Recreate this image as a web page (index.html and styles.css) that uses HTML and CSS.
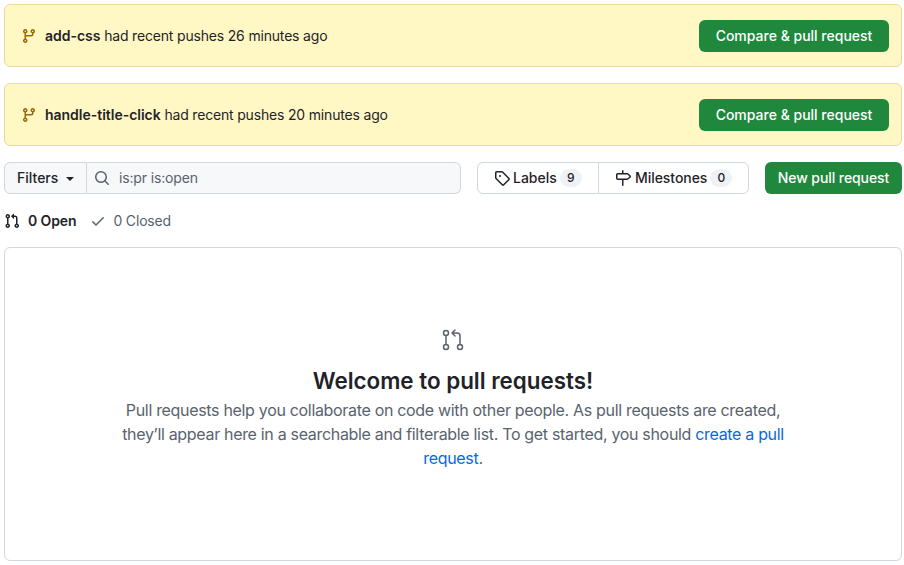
FILE: index.html
```html
<!DOCTYPE html>
<html lang="en">
<head>
<meta charset="utf-8">
<title>Pull requests</title>
<link rel="stylesheet" href="styles.css">
</head>
<body>
<div class="banner">
  <div class="banner-msg">
    <svg class="icon branch" viewBox="0 0 16 16"><path d="M9.5 3.25a2.25 2.25 0 1 1 3 2.122V6A2.5 2.5 0 0 1 10 8.5H6a1 1 0 0 0-1 1v1.128a2.251 2.251 0 1 1-1.5 0V5.372a2.25 2.25 0 1 1 1.5 0v1.836A2.493 2.493 0 0 1 6 7h4a1 1 0 0 0 1-1v-.628A2.25 2.25 0 0 1 9.5 3.25Zm-6 0a.75.75 0 1 0 1.5 0 .75.75 0 0 0-1.5 0Zm8.25-.75a.75.75 0 1 0 0 1.5.75.75 0 0 0 0-1.5ZM4.25 12a.75.75 0 1 0 0 1.5.75.75 0 0 0 0-1.5Z"/></svg>
    <span class="banner-text"><strong>add-css</strong> had recent pushes 26 minutes ago</span>
  </div>
  <a class="btn btn-compare">Compare &amp; pull request</a>
</div>
<div class="banner">
  <div class="banner-msg">
    <svg class="icon branch" viewBox="0 0 16 16"><path d="M9.5 3.25a2.25 2.25 0 1 1 3 2.122V6A2.5 2.5 0 0 1 10 8.5H6a1 1 0 0 0-1 1v1.128a2.251 2.251 0 1 1-1.5 0V5.372a2.25 2.25 0 1 1 1.5 0v1.836A2.493 2.493 0 0 1 6 7h4a1 1 0 0 0 1-1v-.628A2.25 2.25 0 0 1 9.5 3.25Zm-6 0a.75.75 0 1 0 1.5 0 .75.75 0 0 0-1.5 0Zm8.25-.75a.75.75 0 1 0 0 1.5.75.75 0 0 0 0-1.5ZM4.25 12a.75.75 0 1 0 0 1.5.75.75 0 0 0 0-1.5Z"/></svg>
    <span class="banner-text"><strong>handle-title-click</strong> had recent pushes 20 minutes ago</span>
  </div>
  <a class="btn btn-compare">Compare &amp; pull request</a>
</div>

<div class="toolbar">
  <div class="search-group">
    <div class="filters">Filters<span class="caret"></span></div>
    <div class="search">
      <svg class="icon muted" viewBox="0 0 16 16"><path d="M10.68 11.74a6 6 0 0 1-7.922-8.982 6 6 0 0 1 8.982 7.922l3.04 3.04a.749.749 0 0 1-.326 1.275.749.749 0 0 1-.734-.215ZM11.5 7a4.499 4.499 0 1 0-8.997 0A4.499 4.499 0 0 0 11.5 7Z"/></svg>
      <span>is:pr is:open</span>
    </div>
  </div>
  <div class="links">
    <div class="link link-labels">
      <svg class="icon" viewBox="0 0 16 16"><path d="M1 7.775V2.75C1 1.784 1.784 1 2.75 1h5.025c.464 0 .91.184 1.238.513l6.25 6.25a1.75 1.75 0 0 1 0 2.474l-5.026 5.026a1.75 1.75 0 0 1-2.474 0l-6.25-6.25A1.752 1.752 0 0 1 1 7.775Zm1.5 0c0 .066.026.13.073.177l6.25 6.25a.25.25 0 0 0 .354 0l5.025-5.025a.25.25 0 0 0 0-.354l-6.25-6.25a.25.25 0 0 0-.177-.073H2.75a.25.25 0 0 0-.25.25ZM6 5a1 1 0 1 1 0 2 1 1 0 0 1 0-2Z"/></svg>
      <span class="link-text">Labels</span><span class="counter">9</span>
    </div>
    <div class="link link-milestones">
      <svg class="icon" viewBox="0 0 16 16"><path d="M7.75 0a.75.75 0 0 1 .75.75V3h3.634c.414 0 .814.147 1.13.414l2.07 1.75a1.75 1.75 0 0 1 0 2.672l-2.07 1.75a1.75 1.75 0 0 1-1.13.414H8.5v5.25a.75.75 0 0 1-1.5 0V10H2.75A1.75 1.75 0 0 1 1 8.25v-3.5C1 3.784 1.784 3 2.75 3H7V.75A.75.75 0 0 1 7.75 0Zm4.384 8.5a.25.25 0 0 0 .161-.06l2.07-1.75a.248.248 0 0 0 0-.38l-2.07-1.75a.25.25 0 0 0-.161-.06H2.75a.25.25 0 0 0-.25.25v3.5c0 .138.112.25.25.25h9.384Z"/></svg>
      <span class="link-text">Milestones</span><span class="counter">0</span>
    </div>
  </div>
  <a class="btn btn-new">New pull request</a>
</div>

<div class="states">
  <div class="state state-open">
    <svg class="icon" viewBox="0 0 16 16"><path d="M1.5 3.25a2.25 2.25 0 1 1 3 2.122v5.256a2.251 2.251 0 1 1-1.5 0V5.372A2.25 2.25 0 0 1 1.5 3.25Zm5.677-.177L9.573.677A.25.25 0 0 1 10 .854V2.5h1A2.5 2.5 0 0 1 13.5 5v5.628a2.251 2.251 0 1 1-1.5 0V5a1 1 0 0 0-1-1h-1v1.646a.25.25 0 0 1-.427.177L7.177 3.427a.25.25 0 0 1 0-.354ZM3.75 2.5a.75.75 0 1 0 0 1.5.75.75 0 0 0 0-1.5Zm0 9.5a.75.75 0 1 0 0 1.5.75.75 0 0 0 0-1.5Zm8.25.75a.75.75 0 1 0 1.5 0 .75.75 0 0 0-1.5 0Z"/></svg>
    <span>0 Open</span>
  </div>
  <div class="state state-closed">
    <svg class="icon muted" viewBox="0 0 16 16"><path d="M13.78 4.22a.75.75 0 0 1 0 1.06l-7.25 7.25a.75.75 0 0 1-1.06 0L2.22 9.28a.751.751 0 0 1 .018-1.042.751.751 0 0 1 1.042-.018L6 10.94l6.72-6.72a.75.75 0 0 1 1.06 0Z"/></svg>
    <span class="closed-text">0 Closed</span>
  </div>
</div>

<div class="blank">
  <svg class="blank-icon" viewBox="0 0 24 24"><circle cx="5" cy="5" r="2.5"/><circle cx="5" cy="19" r="2.5"/><circle cx="19" cy="19" r="2.5"/><path d="M5 7.5v9M19 16.5V8a3 3 0 0 0-3-3h-5M14 2l-3 3 3 3"/></svg>
  <h2>Welcome to pull requests!</h2>
  <p>Pull requests help you collaborate on code with other people. As pull requests are created, they’ll appear here in a searchable and filterable list. To get started, you should <a class="blue">create a pull request</a>.</p>
</div>
</body>
</html>
```

FILE: styles.css
```css
* { box-sizing: border-box; }
html, body { margin: 0; padding: 0; }
body {
  padding: 4px 2px 4px 4px;
  width: 904px;
  height: 565px;
  overflow: hidden;
  background: #fff;
  color: #1f2328;
  font-family: Inter, "Liberation Sans", sans-serif;
  font-size: 14px;
  line-height: 20px;
}
.icon { width: 16px; height: 16px; fill: currentColor; flex: none; display: block; }
.muted { color: #59636e; }
.branch { color: #9a6700; }

.banner {
  height: 63px;
  margin-bottom: 16px;
  padding: 0 12px 0 16px;
  display: flex;
  align-items: center;
  justify-content: space-between;
  background: #fff8c5;
  border: 1px solid #ead9a0;
  border-radius: 6px;
}
.banner-msg { display: flex; align-items: center; gap: 8px; }
.banner-text { letter-spacing: -0.18px; }
strong { font-weight: 600; letter-spacing: -0.02px; }

.btn {
  display: flex;
  align-items: center;
  justify-content: center;
  height: 32px;
  background: #1f883d;
  color: #fff;
  font-weight: 500;
  border-radius: 6px;
  white-space: nowrap;
}
.btn-compare { width: 190px; }
.btn-new { width: 137px; margin-left: 16px; letter-spacing: -0.08px; }

.toolbar { display: flex; height: 32px; }
.search-group { display: flex; width: 457px; margin-right: 16px; }
.filters {
  width: 83px;
  display: flex;
  align-items: center;
  padding-left: 12px;
  font-weight: 500;
  background: #f6f8fa;
  border: 1px solid #d0d7de;
  border-radius: 6px 0 0 6px;
}
.caret {
  margin-left: 8px;
  margin-top: 1px;
  border: 4px solid transparent;
  border-top-color: currentColor;
  border-bottom: 0;
}
.search {
  flex: 1;
  display: flex;
  align-items: center;
  gap: 8px;
  padding-left: 7px;
  color: #59636e;
  letter-spacing: -0.15px;
  background: #f6f8fa;
  border: 1px solid #d0d7de;
  border-left: 0;
  border-radius: 0 6px 6px 0;
}
.search span { margin-left: 1px; }
.links { display: flex; width: 272px; border: 1px solid #d0d7de; border-radius: 6px; }
.link { display: flex; align-items: center; font-weight: 500; padding-left: 16px; }
.link-labels { width: 121px; border-right: 1px solid #d0d7de; }
.link-milestones { flex: 1; }
.link-text { margin-left: 3px; }
.link-milestones .link-text { margin-left: 4px; letter-spacing: -0.05px; }
.counter {
  margin-left: 3px;
  min-width: 22px;
  height: 18px;
  padding: 0 6px;
  font-size: 12px;
  line-height: 18px;
  text-align: center;
  background: #eff2f5;
  border-radius: 9px;
}

.states { display: flex; height: 20px; margin-top: 17px; align-items: center; }
.state { display: flex; align-items: center; gap: 8px; }
.state-open { font-weight: 600; letter-spacing: -0.12px; }
.state-closed { margin-left: 14px; gap: 7px; color: #59636e; font-weight: 400; }
.closed-text { letter-spacing: -0.16px; }

.blank {
  height: 314px;
  margin-top: 16px;
  padding-top: 80px;
  display: flex;
  flex-direction: column;
  align-items: center;
  border: 1px solid #d0d7de;
  border-radius: 6px;
}
.blank-icon { width: 24px; height: 24px; fill: none; stroke: #59636e; stroke-width: 1.5; stroke-linecap: round; stroke-linejoin: round; }
h2 { margin: 12px 0 0; font-size: 22.4px; line-height: 34px; font-weight: 600; color: #1f2328; }
p { margin: 0; width: 668px; font-size: 16px; line-height: 24px; letter-spacing: -0.32px; text-align: center; color: #59636e; }
.blue { color: #0969da; }
```
